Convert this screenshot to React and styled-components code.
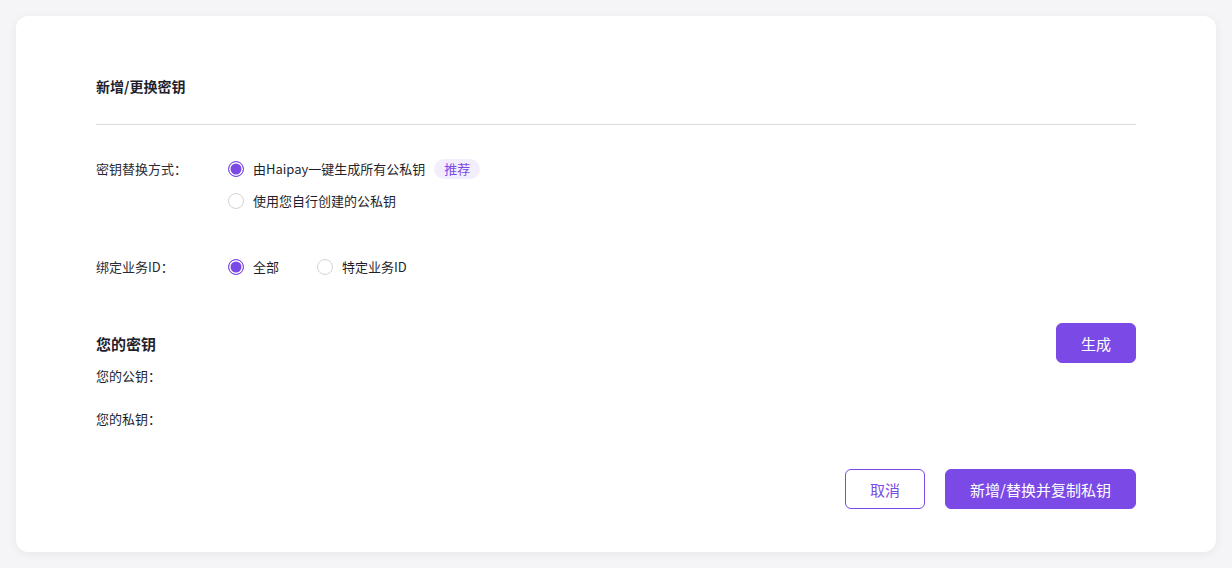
import styled, { createGlobalStyle } from "styled-components";

const Global = createGlobalStyle`
  body { margin: 0; background: #f5f5f7; font-family: "Noto Sans CJK SC", "Noto Sans", sans-serif; color: #1f1f2e; }
`;

const Page = styled.div`
  padding: 16px;
`;
const Card = styled.div`
  background: #fff;
  border-radius: 12px;
  box-shadow: 0 2px 10px rgba(0, 0, 0, 0.06);
  padding: 60px 80px 48px;
  height: 536px;
  box-sizing: border-box;
`;
const Title = styled.div`
  font-size: 14px;
  font-weight: 700;
  line-height: 20px;
  padding-bottom: 28px;
  border-bottom: 1px solid #dcdce0;
`;
const Row = styled.div`
  display: flex;
  margin-top: ${(p) => p.top}px;
`;
const Label = styled.div`
  width: 132px;
  font-size: 13px;
  line-height: 20px;
  color: #2a2a35;
`;
const Options = styled.div`
  display: flex;
  flex-direction: ${(p) => (p.column ? "column" : "row")};
  gap: ${(p) => (p.column ? "12px" : "38px")};
`;
const Option = styled.label`
  display: flex;
  align-items: center;
  gap: 9px;
  font-size: 13px;
  line-height: 20px;
`;
const Dot = styled.span`
  width: 16px;
  height: 16px;
  box-sizing: border-box;
  border-radius: 50%;
  border: 1px solid ${(p) => (p.on ? "#7b4ae6" : "#d4d4d8")};
  background: ${(p) => (p.on ? "#7b4ae6" : "#fff")};
  box-shadow: ${(p) => (p.on ? "inset 0 0 0 1.5px #fff" : "none")};
`;
const Tag = styled.span`
  margin-left: 0;
  padding: 0 10px;
  border-radius: 10px;
  background: #f3eefd;
  color: #7b4ae6;
  font-size: 13px;
  line-height: 20px;
`;
const Section = styled.div`
  display: flex;
  justify-content: space-between;
  align-items: center;
  margin-top: 46px;
`;
const SubTitle = styled.div`
  font-size: 15px;
  font-weight: 600;
`;
const Field = styled.div`
  font-size: 13px;
  line-height: 20px;
  margin-top: ${(p) => p.top}px;
`;
const Footer = styled.div`
  display: flex;
  justify-content: flex-end;
  gap: 20px;
  margin-top: 40px;
`;
const Button = styled.button`
  height: 40px;
  min-width: 80px;
  padding: 0 ${(p) => (p.wide ? "24px" : "0")};
  border-radius: 6px;
  font-family: inherit;
  font-size: 15px;
  cursor: pointer;
  border: 1px solid #7b4ae6;
  background: ${(p) => (p.ghost ? "#fff" : "#7b4ae6")};
  color: ${(p) => (p.ghost ? "#7b4ae6" : "#fff")};
`;

export default function App() {
  return (
    <Page>
      <Global />
      <Card>
        <Title>新增/更换密钥</Title>
        <Row top={34}>
          <Label>密钥替换方式：</Label>
          <Options column>
            <Option><Dot on />由Haipay一键生成所有公私钥<Tag>推荐</Tag></Option>
            <Option><Dot />使用您自行创建的公私钥</Option>
          </Options>
        </Row>
        <Row top={46}>
          <Label>绑定业务ID：</Label>
          <Options>
            <Option><Dot on />全部</Option>
            <Option><Dot />特定业务ID</Option>
          </Options>
        </Row>
        <Section>
          <SubTitle>您的密钥</SubTitle>
          <Button>生成</Button>
        </Section>
        <Field top={3}>您的公钥：</Field>
        <Field top={23}>您的私钥：</Field>
        <Footer>
          <Button ghost>取消</Button>
          <Button wide>新增/替换并复制私钥</Button>
        </Footer>
      </Card>
    </Page>
  );
}
